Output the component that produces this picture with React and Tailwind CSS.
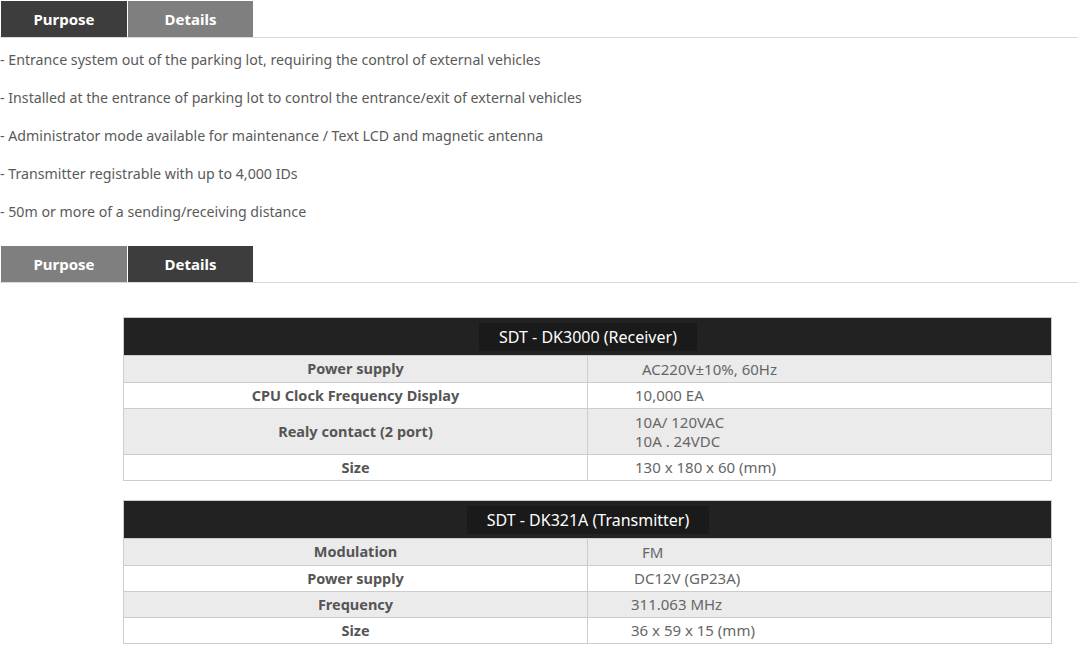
const purpose = [
  "- Entrance system out of the parking lot, requiring the control of external vehicles",
  "- Installed at the entrance of parking lot to control the entrance/exit of external vehicles",
  "- Administrator mode available for maintenance / Text LCD and magnetic antenna",
  "- Transmitter registrable with up to 4,000 IDs",
  "- 50m or more of a sending/receiving distance",
]

const receiver = [
  { label: "Power supply", value: ["AC220V±10%, 60Hz"], pad: "pl-[54px]", h: "h-[27px]", bg: "bg-[#ebebeb]" },
  { label: "CPU Clock Frequency Display", value: ["10,000 EA"], pad: "pl-[47px]", h: "h-[26px]", bg: "bg-white" },
  { label: "Realy contact (2 port)", value: ["10A/ 120VAC", "10A . 24VDC"], pad: "pl-[47px]", h: "h-[46px]", bg: "bg-[#ebebeb]" },
  { label: "Size", value: ["130 x 180 x 60 (mm)"], pad: "pl-[47px]", h: "h-[26px]", bg: "bg-white" },
]

const transmitter = [
  { label: "Modulation", value: ["FM"], pad: "pl-[54px]", h: "h-[27px]", bg: "bg-[#ebebeb]" },
  { label: "Power supply", value: ["DC12V (GP23A)"], pad: "pl-[46px]", h: "h-[26px]", bg: "bg-white" },
  { label: "Frequency", value: ["311.063 MHz"], pad: "pl-[43px]", h: "h-[26px]", bg: "bg-[#ebebeb]" },
  { label: "Size", value: ["36 x 59 x 15 (mm)"], pad: "pl-[43px]", h: "h-[26px]", bg: "bg-white" },
]

const Tabs = ({ active }) => (
  <div className="flex items-end border-b border-[#d9d9d9] pl-px pt-px">
    <div
      className={`w-[126px] h-[36px] flex items-center justify-center text-white font-bold text-[15px] ${
        active === "purpose" ? "bg-[#3d3d3d]" : "bg-[#7f7f7f]"
      }`}
    >
      Purpose
    </div>
    <div
      className={`ml-px w-[125px] h-[36px] flex items-center justify-center text-white font-bold text-[15px] ${
        active === "details" ? "bg-[#3d3d3d]" : "bg-[#7f7f7f]"
      }`}
    >
      Details
    </div>
  </div>
)

const SpecTable = ({ title, rows }) => (
  <div className="ml-[123px] w-[929px] border border-[#cccccc]">
    <div className="h-[37px] bg-[#222222] flex items-center justify-center pl-[1px]">
      <span className="bg-[#1a1a1a] text-white text-[16px] px-[20px] h-[28px] flex items-center">{title}</span>
    </div>
    {rows.map((r, i) => (
      <div key={i} className={`flex border-t border-[#cccccc] ${r.h} ${r.bg}`}>
        <div className="w-[464px] flex items-center justify-center font-bold text-[14.5px] text-[#555555] border-r border-[#cccccc]">
          {r.label}
        </div>
        <div className={`flex-1 flex flex-col justify-center text-[15px] text-[#666666] leading-[19px] ${r.pad}`}>
          {r.value.map((v, j) => (
            <span key={j}>{v}</span>
          ))}
        </div>
      </div>
    ))}
  </div>
)

export default function App() {
  return (
    <div className="w-[1078px] bg-white font-['Noto_Sans','Open_Sans',sans-serif] text-[#555555]">
      <Tabs active="purpose" />
      <div className="pt-[3px] pb-[14px]">
        {purpose.map((p, i) => (
          <div key={i} className="h-[38px] flex items-center text-[14.2px] text-[#5a5a5a]">
            {p}
          </div>
        ))}
      </div>
      <Tabs active="details" />
      <div className="pt-[34px]">
        <SpecTable title="SDT - DK3000 (Receiver)" rows={receiver} />
        <div className="h-[19px]" />
        <SpecTable title="SDT - DK321A (Transmitter)" rows={transmitter} />
      </div>
    </div>
  )
}
